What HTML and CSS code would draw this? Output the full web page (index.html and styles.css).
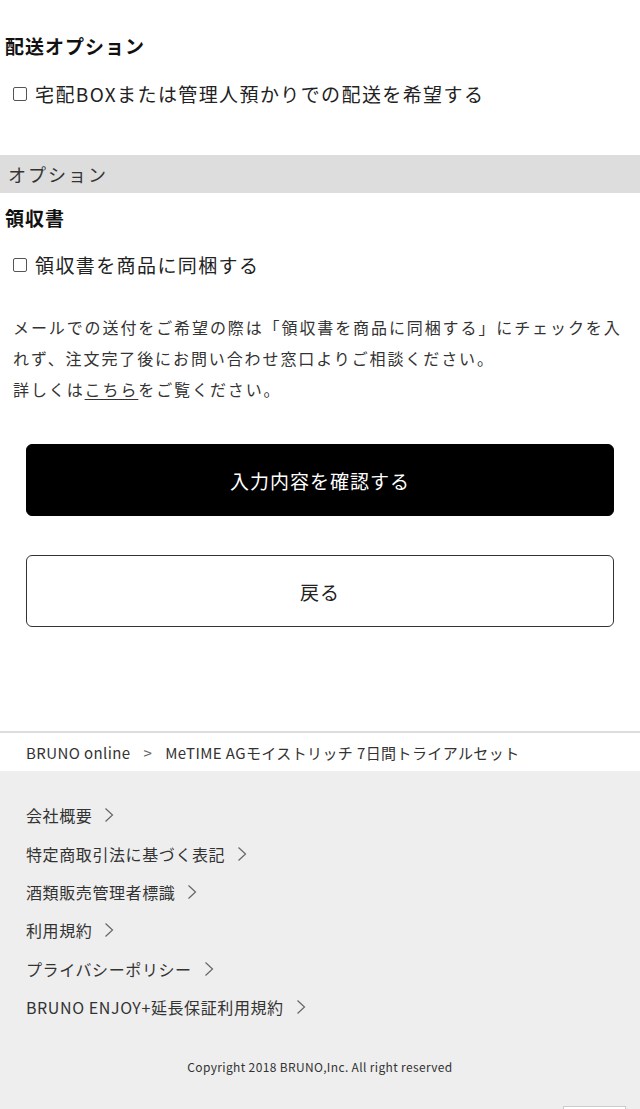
FILE: index.html
```html
<!DOCTYPE html>
<html lang="ja">
<head>
<meta charset="utf-8">
<title>配送オプション</title>
<link rel="stylesheet" href="styles.css">
</head>
<body>
<main class="form">
  <section class="block">
    <h2 class="heading">配送オプション</h2>
    <label class="check-row"><input type="checkbox" class="check"><span>宅配BOXまたは管理人預かりでの配送を希望する</span></label>
  </section>

  <div class="bar">オプション</div>

  <section class="block">
    <h2 class="heading heading-sub">領収書</h2>
    <label class="check-row check-row-sub"><input type="checkbox" class="check"><span>領収書を商品に同梱する</span></label>
    <p class="note">メールでの送付をご希望の際は「領収書を商品に同梱する」にチェックを入れず、注文完了後にお問い合わせ窓口よりご相談ください。<br>詳しくは<a href="#" class="note-link">こちら</a>をご覧ください。</p>
  </section>

  <div class="actions">
    <button class="btn btn-primary" type="button">入力内容を確認する</button>
    <button class="btn btn-secondary" type="button">戻る</button>
  </div>
</main>

<footer class="footer">
  <nav class="crumbs">
    <a href="#" class="crumb">BRUNO online</a>
    <span class="crumb-sep">&gt;</span>
    <span class="crumb">MeTIME AGモイストリッチ 7日間トライアルセット</span>
  </nav>
  <div class="footer-body">
    <ul class="links">
      <li><a href="#" class="link">会社概要<svg class="chev" viewBox="0 0 10 16" width="10" height="16"><path d="M1.5 1.5 L8.5 8 L1.5 14.5" fill="none" stroke="#666" stroke-width="1.2"/></svg></a></li>
      <li><a href="#" class="link">特定商取引法に基づく表記<svg class="chev" viewBox="0 0 10 16" width="10" height="16"><path d="M1.5 1.5 L8.5 8 L1.5 14.5" fill="none" stroke="#666" stroke-width="1.2"/></svg></a></li>
      <li><a href="#" class="link">酒類販売管理者標識<svg class="chev" viewBox="0 0 10 16" width="10" height="16"><path d="M1.5 1.5 L8.5 8 L1.5 14.5" fill="none" stroke="#666" stroke-width="1.2"/></svg></a></li>
      <li><a href="#" class="link">利用規約<svg class="chev" viewBox="0 0 10 16" width="10" height="16"><path d="M1.5 1.5 L8.5 8 L1.5 14.5" fill="none" stroke="#666" stroke-width="1.2"/></svg></a></li>
      <li><a href="#" class="link">プライバシーポリシー<svg class="chev" viewBox="0 0 10 16" width="10" height="16"><path d="M1.5 1.5 L8.5 8 L1.5 14.5" fill="none" stroke="#666" stroke-width="1.2"/></svg></a></li>
      <li><a href="#" class="link">BRUNO ENJOY+延長保証利用規約<svg class="chev" viewBox="0 0 10 16" width="10" height="16"><path d="M1.5 1.5 L8.5 8 L1.5 14.5" fill="none" stroke="#666" stroke-width="1.2"/></svg></a></li>
    </ul>
    <p class="copyright">Copyright 2018 BRUNO,Inc. All right reserved</p>
    <div class="pagetop-row"><a href="#" class="pagetop"></a></div>
  </div>
</footer>
</body>
</html>
```

FILE: styles.css
```css
* { box-sizing: border-box; }

html, body {
  margin: 0;
  padding: 0;
  background: #fff;
  color: #222;
  font-family: "Noto Sans CJK JP", "Noto Sans", sans-serif;
}

.form { display: flex; flex-direction: column; }

.block { padding: 0 5px; display: flex; flex-direction: column; }

.heading {
  margin: 31px 0 0;
  font-size: 19px;
  line-height: 30px;
  font-weight: 700;
  letter-spacing: 1px;
  color: #111;
}

.heading-sub { margin-top: 10px; }

.check-row {
  display: flex;
  align-items: center;
  gap: 8px;
  margin: 18px 0 0 8px;
  font-size: 19px;
  line-height: 30px;
  letter-spacing: 1.4px;
  color: #222;
}

.check-row-sub { margin-top: 17px; }

.check {
  appearance: none;
  -webkit-appearance: none;
  margin: 0;
  width: 14px;
  height: 14px;
  border: 1px solid #555;
  border-radius: 2px;
  background: #fff;
  flex: none;
}

.bar {
  margin-top: 46px;
  height: 38px;
  background: #dddddd;
  padding: 0 8px;
  display: flex;
  align-items: center;
  font-size: 18px;
  letter-spacing: 2px;
  color: #333;
}

.note {
  margin: 32px 0 0;
  padding: 0 8px;
  font-size: 16px;
  line-height: 31px;
  letter-spacing: 1.9px;
  color: #333;
}

.note-link { color: #333; text-decoration: underline; text-underline-offset: 3px; }

.actions {
  display: flex;
  flex-direction: column;
  gap: 39px;
  padding: 0 26px;
  margin-top: 39px;
}

.btn {
  height: 72px;
  border-radius: 6px;
  font-family: inherit;
  font-size: 19px;
  letter-spacing: 1px;
  cursor: pointer;
}

.btn-primary { background: #000; color: #fff; border: 1px solid #000; }
.btn-secondary { background: #fff; color: #222; border: 1px solid #333; }

.footer { margin-top: 104px; border-top: 2px solid #ddd; }

.crumbs {
  height: 38px;
  display: flex;
  align-items: center;
  gap: 13px;
  padding: 0 26px;
  font-size: 15px;
  letter-spacing: 0.4px;
  color: #333;
}

.crumb { color: #333; text-decoration: none; }
.crumb-sep { color: #666; }

.footer-body {
  background: #eeeeee;
  padding-top: 25px;
  display: flex;
  flex-direction: column;
}

.links { list-style: none; margin: 0; padding: 0 26px; }

.links li { height: 38.4px; display: flex; align-items: center; }

.link {
  display: flex;
  align-items: center;
  gap: 12px;
  font-size: 16px;
  letter-spacing: 0.6px;
  color: #333;
  text-decoration: none;
}

.chev { flex: none; }

.copyright {
  margin: 31px 0 0;
  text-align: center;
  font-size: 12px;
  line-height: 20px;
  letter-spacing: 0.35px;
  color: #333;
}

.pagetop-row { display: flex; justify-content: flex-end; padding: 29px 14px 20px 0; }

.pagetop {
  width: 63px;
  height: 40px;
  background: #fff;
  border: 1px solid #ccc;
}
```
